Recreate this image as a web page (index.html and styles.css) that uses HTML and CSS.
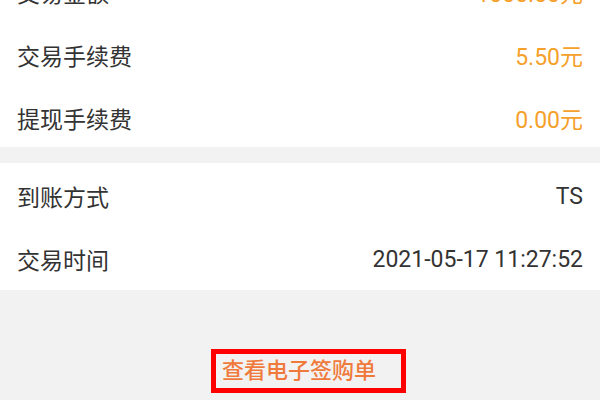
FILE: index.html
```html
<!DOCTYPE html>
<html lang="zh-CN">
<head>
    <meta charset="UTF-8">
    <meta name="viewport" content="width=device-width, initial-scale=1.0">
    <title>交易详情</title>
    <link rel="stylesheet" href="styles.css">
</head>
<body>

<section class="panel panel-top">
    <div class="row">
        <span class="label">交易金额</span>
        <span class="value money">1000.00元</span>
    </div>
    <div class="row">
        <span class="label">交易手续费</span>
        <span class="value money">5.50元</span>
    </div>
    <div class="row">
        <span class="label">提现手续费</span>
        <span class="value money">0.00元</span>
    </div>
</section>

<section class="panel panel-bottom">
    <div class="row">
        <span class="label">到账方式</span>
        <span class="value">TS</span>
    </div>
    <div class="row">
        <span class="label">交易时间</span>
        <span class="value">2021-05-17 11:27:52</span>
    </div>
</section>

<div class="receipt">
    <a class="receipt-link" href="#">查看电子签购单</a>
</div>

</body>
</html>
```

FILE: styles.css
```css
body {
    margin: 0;
    padding: 0;
    background-color: #f2f2f2;
    font-family: Roboto, "Noto Sans CJK SC", sans-serif;
    color: #333;
}
.panel {
    background-color: #fff;
    padding: 5px 17px 0;
    display: flex;
    flex-direction: column;
    gap: 5px;
}
.panel-top {
    margin-top: -42px;
    margin-bottom: 16px;
}
.panel-bottom {
    padding-top: 4px;
    padding-bottom: 2px;
}
.row {
    height: 58px;
    display: flex;
    justify-content: space-between;
    align-items: center;
    font-size: 23px;
}
.value {
    color: #333;
}
.money {
    color: #f5a02a;
}
.receipt {
    display: flex;
    justify-content: center;
    padding-top: 59px;
}
.receipt-link {
    margin-left: 17px;
    padding: 2px 25px 2px 6px;
    border: 5px solid #ff0000;
    color: #f07a3c;
    font-size: 22px;
    font-weight: 500;
    line-height: 30px;
    text-decoration: none;
}
```
